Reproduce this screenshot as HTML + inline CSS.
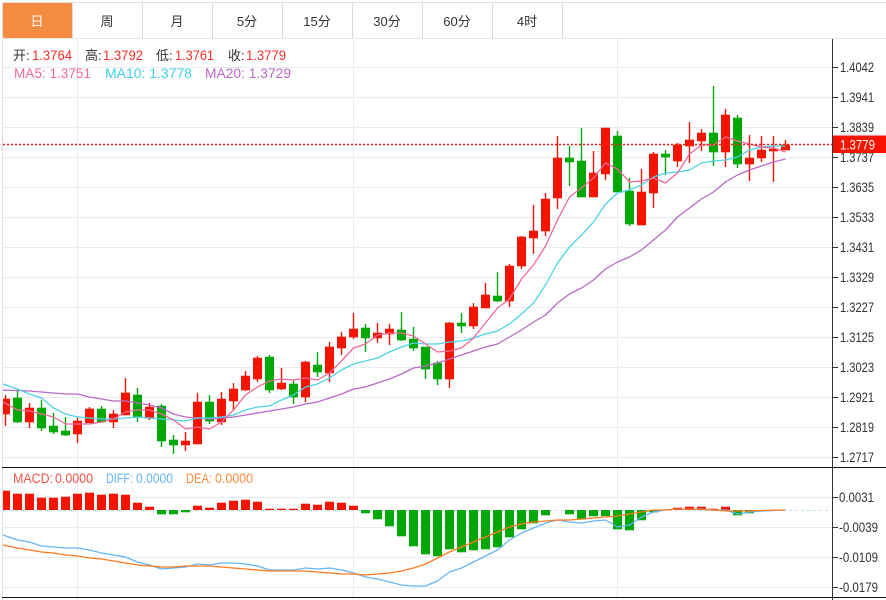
<!DOCTYPE html>
<html lang="zh"><head><meta charset="utf-8"><title>K线图</title>
<style>
html,body{margin:0;padding:0;background:#fff;width:886px;height:600px;overflow:hidden}
svg{display:block;font-family:"Liberation Sans","Noto Sans CJK SC",sans-serif}
</style></head><body>
<svg width="886" height="600" viewBox="0 0 886 600" xmlns="http://www.w3.org/2000/svg">
<rect width="886" height="600" fill="#fff"/>

<!-- grid -->
<path fill="none" stroke="#e6ecf1" stroke-width="1" d="M3 67.5H832M3 97.5H832M3 127.5H832M3 157.5H832M3 187.5H832M3 217.5H832M3 247.5H832M3 277.5H832M3 307.5H832M3 337.5H832M3 367.5H832M3 397.5H832M3 427.5H832M3 457.5H832M3 497.5H832M3 527.5H832M3 557.5H832M3 587.5H832M77.5 39V597M353.5 39V597M617.5 39V597"/>

<!-- candles -->
<g fill="none">
<path stroke="#f61300" stroke-width="1.4" d="M5.5 395V426M29.5 403V428M77.5 417V443M89.5 407V423M113.5 410V428M125.5 378V415M149.5 403V420M185.5 432V451M197.5 393V444M221.5 392V425M233.5 383V410M245.5 371V391M257.5 356V382M281.5 368V390M305.5 361V402M329.5 342V382M341.5 332V355M353.5 313V339M377.5 323V343M389.5 324V345M449.5 322V388M473.5 303V329M485.5 283V308M509.5 264V307M521.5 236V269M533.5 205V254M545.5 193V236M557.5 136V209M593.5 151V197M605.5 128V180M641.5 169V225M653.5 152V208M677.5 143V167M689.5 122V163M701.5 129V151M725.5 109V167M749.5 135V181M761.5 136V162M773.5 136V182M785.5 140V150"/>
<path stroke="#00a808" stroke-width="1.4" d="M17.5 389V423M41.5 400V431M53.5 413V434M65.5 417V436M101.5 406V423M137.5 388V422M161.5 404V447M173.5 435V454M209.5 395V424M269.5 355V393M293.5 380V404M317.5 352V377M365.5 324V352M401.5 312V341M413.5 327V351M425.5 347V379M437.5 361V385M461.5 313V333M497.5 272V302M569.5 146V186M581.5 128V197M617.5 131V192M629.5 178V226M665.5 150V175M713.5 86V166M737.5 115V168"/>
<g stroke-width="9">
<path id="rb" stroke="#f61300" d="M5.5 399V414M29.5 408V422M77.5 421V434M89.5 409V423M113.5 414V422M125.5 393V415M149.5 407V418M185.5 441V445M197.5 402V444M221.5 399V422M233.5 389V401M245.5 376V390M257.5 358V379M281.5 383V389M305.5 362V397M329.5 347V373M341.5 337V348M353.5 329V337M377.5 333V338M389.5 329V334M449.5 323V379M473.5 307V326M485.5 295V308M509.5 266V301M521.5 237V266M533.5 231V238M545.5 199V231M557.5 158V198M593.5 173V197M605.5 128V174M641.5 192V225M653.5 154V193M677.5 145V161M689.5 140V146M701.5 133V141M725.5 115V152M749.5 158V164M761.5 150V158M773.5 149V151M785.5 145V150"/>
<use href="#rb" y="-1" opacity=".3"/><use href="#rb" y="1" opacity=".3"/>
<path id="gb" stroke="#00a808" d="M17.5 398V422M41.5 408V428M53.5 426V432M65.5 431V435M101.5 409V422M137.5 395V417M161.5 406V441M173.5 440V445M209.5 402V421M269.5 357V390M293.5 384V397M317.5 365V372M365.5 328V338M401.5 330V340M413.5 339V348M425.5 347V369M437.5 363V379M461.5 323V326M497.5 296V301M569.5 158V162M581.5 161V197M617.5 136V192M629.5 191V224M665.5 154V157M713.5 133V152M737.5 118V164"/>
<use href="#gb" y="-1" opacity=".3"/><use href="#gb" y="1" opacity=".3"/>
</g>

<!-- MA lines -->
<g stroke-width="1.3" stroke-linejoin="round">
<path stroke="#ba68c8" d="M3 390L29.500 391L41.500 392L53.500 393L65.500 394L77.500 394L89.500 397L101.500 399L113.500 401L125.500 401L137.500 403L149.500 405L161.500 408L173.500 414L185.500 417L197.500 418L209.500 419L221.500 418L233.500 417L245.500 415L257.500 413L269.500 411L281.500 409L293.500 407L305.500 404L317.500 402L329.500 398L341.500 394L353.500 389L365.500 387L377.500 383L389.500 379L401.500 374L413.500 368L425.500 366L437.500 363L449.500 359L461.500 355L473.500 351L485.500 347L497.500 344L509.500 337L521.500 330L533.500 322L545.500 315L557.500 303L569.500 294L581.500 288L593.500 280L605.500 269L617.500 262L629.500 257L641.500 250L653.500 240L665.500 230L677.500 217L689.500 208L701.500 199L713.500 192L725.500 182L737.500 175L749.500 170L761.500 166L773.500 162L785.500 159"/>
<path stroke="#4dd3e8" d="M3 384L17.500 389L29.500 394L41.500 398L53.500 408L65.500 414L77.500 417L89.500 418L101.500 419L113.500 419L125.500 418L137.500 417L149.500 418L161.500 419L173.500 420L185.500 421L197.500 418L209.500 418L221.500 417L233.500 415L245.500 410L257.500 407L269.500 406L281.500 400L293.500 395L305.500 387L317.500 384L329.500 378L341.500 370L353.500 364L365.500 361L377.500 358L389.500 352L401.500 347L413.500 343L425.500 344L437.500 344L449.500 342L461.500 341L473.500 338L485.500 334L497.500 331L509.500 324L521.500 314L533.500 303L545.500 285L557.500 263L569.500 247L581.500 235L593.500 222L605.500 204L617.500 193L629.500 190L641.500 185L653.500 177L665.500 173L677.500 172L689.500 170L701.500 163L713.500 161L725.500 160L737.500 157L749.500 150L761.500 147L773.500 146L785.500 146"/>
<path stroke="#f2689a" d="M3 402L17.500 410L29.500 411L41.500 414L53.500 417L65.500 424L77.500 424L89.500 424L101.500 422L113.500 419L125.500 412L137.500 410L149.500 410L161.500 414L173.500 420L185.500 429L197.500 427L209.500 429L221.500 422L233.500 410L245.500 395L257.500 387L269.500 381L281.500 379L293.500 380L305.500 378L317.500 380L329.500 373L341.500 361L353.500 348L365.500 344L377.500 335L389.500 333L401.500 333L413.500 336L425.500 344L437.500 352L449.500 351L461.500 348L473.500 338L485.500 323L497.500 308L509.500 299L521.500 279L533.500 265L545.500 246L557.500 220L569.500 197L581.500 188L593.500 178L605.500 163L617.500 169L629.500 182L641.500 181L653.500 178L665.500 183L677.500 173L689.500 154L701.500 145L713.500 145L725.500 137L737.500 141L749.500 144L761.500 147L773.500 148L785.500 152"/>
</g>

<!-- MACD -->
<path stroke="#b8e2f2" stroke-dasharray="3 3" d="M3 510.500H830"/>
<g stroke-width="9">
<path id="rm" stroke="#f61300" d="M5.500 491V510M17.500 494V510M29.500 494V510M41.500 498V510M53.500 498V510M65.500 497V510M77.500 494V510M89.500 493V510M101.500 495V510M113.500 494V510M125.500 495V510M137.500 503V510M149.500 507V510M197.500 506V510M209.500 508V510M221.500 503V510M233.500 501V510M245.500 500V510M257.500 502V510M269.500 509V510M281.500 509V510M293.500 509V510M305.500 504V510M317.500 505V510M329.500 502V510M341.500 503V510M353.500 506V510M677.500 508V510M689.500 507V510M701.500 507V510M713.500 509V510M725.500 507V510"/>
<use href="#rm" y="-1" opacity=".3"/>
<path id="gm" stroke="#00a808" d="M161.500 510V514M173.500 510V514M185.500 510V512M365.500 510V513M377.500 510V519M389.500 510V526M401.500 510V536M413.500 510V546M425.500 510V554M437.500 510V556M449.500 510V549M461.500 510V552M473.500 510V550M485.500 510V549M497.500 510V547M509.500 510V537M521.500 510V529M533.500 510V523M545.500 510V515M569.500 510V514M581.500 510V519M593.500 510V516M605.500 510V516M617.500 510V529M629.500 510V530M641.500 510V520M653.500 510V512M737.500 510V515M749.500 510V513"/>
<use href="#gm" y="1" opacity=".3"/>
</g>
<g stroke-width="1.3" stroke-linejoin="round">
<path stroke="#64b5f6" d="M3 535L17.500 540L29.500 542L41.500 546L53.500 547L65.500 548L77.500 548L89.500 550L101.500 553L113.500 555L125.500 557L137.500 562L149.500 565L161.500 569L173.500 568L185.500 567L197.500 564L209.500 565L221.500 563L233.500 563L245.500 564L257.500 566L269.500 570L281.500 570L293.500 570L305.500 568L317.500 569L329.500 568L341.500 570L353.500 573L365.500 577L377.500 579L389.500 582L401.500 585L413.500 586L425.500 586L437.500 581L449.500 572L461.500 568L473.500 562L485.500 556L497.500 550L509.500 540L521.500 533L533.500 528L545.500 523L557.500 520L569.500 522L581.500 523L593.500 521L605.500 520L617.500 527L629.500 525L641.500 517L653.500 512L665.500 510L677.500 509L689.500 509L701.500 509L713.500 510L725.500 510L737.500 514L749.500 512L761.500 511L785.500 510"/>
<path stroke="#ff7a1f" d="M3 545L17.500 548L29.500 550L41.500 552L53.500 553L65.500 555L77.500 556L89.500 558L101.500 559L113.500 561L125.500 563L137.500 565L149.500 566L161.500 567L173.500 567L185.500 566L197.500 566L209.500 566L221.500 567L233.500 568L245.500 569L257.500 570L269.500 571L281.500 571L293.500 571L305.500 571L317.500 572L329.500 573L341.500 574L353.500 574L365.500 575L377.500 574L389.500 573L401.500 571L413.500 568L425.500 564L437.500 558L449.500 552L461.500 547L473.500 542L485.500 537L497.500 532L509.500 527L521.500 524L533.500 522L545.500 521L557.500 520L569.500 520L581.500 519L593.500 518L605.500 517L617.500 516L629.500 514L641.500 512L653.500 510L665.500 510L677.500 509L689.500 509L701.500 509.500L713.500 510L725.500 511L737.500 511L749.500 511L761.500 510.500L785.500 510"/>
</g>
</g>

<!-- last price dotted line -->
<path stroke="#ff1a0a" stroke-width="1.4" stroke-dasharray="2 2" d="M3 144.500H832"/>

<!-- frame -->
<rect x="0" y="0" width="2" height="600" fill="#fff"/>
<rect x="2" y="3" width="1" height="597" fill="#dfdfdf"/>
<rect x="2" y="2" width="884" height="1" fill="#dedede"/>
<rect x="2" y="38" width="884" height="1" fill="#e4e6e8"/>
<rect x="2" y="467" width="884" height="1" fill="#111"/>
<rect x="2" y="597" width="884" height="1" fill="#111"/>
<rect x="832" y="39" width="1" height="561" fill="#333"/>
<path stroke="#333" d="M833 67.500h5M833 97.500h5M833 127.500h5M833 157.500h5M833 187.500h5M833 217.500h5M833 247.500h5M833 277.500h5M833 307.500h5M833 337.500h5M833 367.500h5M833 397.500h5M833 427.500h5M833 457.500h5M833 497.500h5M833 527.500h5M833 557.500h5M833 587.500h5"/>

<!-- tabs -->
<rect x="3" y="3" width="69" height="35" rx="1" fill="#f58b40"/>
<path stroke="#d9d9d9" d="M72.500 3V38M142.500 3V38M212.500 3V38M282.500 3V38M352.500 3V38M422.500 3V38M492.500 3V38M562.500 3V38"/>
<g font-size="13" text-anchor="middle" fill="#333">
<text x="37" y="26" fill="#fff">日</text>
<text x="107" y="26">周</text>
<text x="177" y="26">月</text>
<text x="247" y="26">5分</text>
<text x="317" y="26">15分</text>
<text x="387" y="26">30分</text>
<text x="457" y="26">60分</text>
<text x="527" y="26">4时</text>
</g>

<!-- legends -->
<g font-size="14">
<g fill="#333" font-size="13">
<text x="13" y="60">开:</text><text x="85" y="60">高:</text><text x="156" y="60">低:</text><text x="228" y="60">收:</text>
</g>
<g fill="#f8302a">
<text x="32" y="60" textLength="40" lengthAdjust="spacingAndGlyphs">1.3764</text><text x="103" y="60" textLength="40" lengthAdjust="spacingAndGlyphs">1.3792</text><text x="175" y="60" textLength="39" lengthAdjust="spacingAndGlyphs">1.3761</text><text x="246" y="60" textLength="40" lengthAdjust="spacingAndGlyphs">1.3779</text>
</g>
<text x="14" y="78" fill="#f2689a" textLength="77" lengthAdjust="spacingAndGlyphs">MA5:  1.3751</text>
<text x="105" y="78" fill="#3fd0e6" textLength="87" lengthAdjust="spacingAndGlyphs">MA10:  1.3778</text>
<text x="205" y="78" fill="#ba68c8" textLength="86" lengthAdjust="spacingAndGlyphs">MA20:  1.3729</text>
<g font-size="13.5">
<text x="13" y="483" fill="#f0504a" textLength="40" lengthAdjust="spacingAndGlyphs">MACD:</text><text x="55" y="483" fill="#f0504a" textLength="38" lengthAdjust="spacingAndGlyphs">0.0000</text>
<text x="106" y="483" fill="#64b5f6" textLength="27" lengthAdjust="spacingAndGlyphs">DIFF:</text><text x="136" y="483" fill="#64b5f6" textLength="37" lengthAdjust="spacingAndGlyphs">0.0000</text>
<text x="186" y="483" fill="#ff8a3d" textLength="26" lengthAdjust="spacingAndGlyphs">DEA:</text><text x="215" y="483" fill="#ff8a3d" textLength="38" lengthAdjust="spacingAndGlyphs">0.0000</text>
</g>
</g>

<!-- axis labels -->
<g font-size="13.500" fill="#333">
<text x="840" y="72" textLength="34" lengthAdjust="spacingAndGlyphs">1.4042</text>
<text x="840" y="102" textLength="34" lengthAdjust="spacingAndGlyphs">1.3941</text>
<text x="840" y="132" textLength="34" lengthAdjust="spacingAndGlyphs">1.3839</text>
<text x="840" y="162" textLength="34" lengthAdjust="spacingAndGlyphs">1.3737</text>
<text x="840" y="192" textLength="34" lengthAdjust="spacingAndGlyphs">1.3635</text>
<text x="840" y="222" textLength="34" lengthAdjust="spacingAndGlyphs">1.3533</text>
<text x="840" y="252" textLength="34" lengthAdjust="spacingAndGlyphs">1.3431</text>
<text x="840" y="282" textLength="34" lengthAdjust="spacingAndGlyphs">1.3329</text>
<text x="840" y="312" textLength="34" lengthAdjust="spacingAndGlyphs">1.3227</text>
<text x="840" y="342" textLength="34" lengthAdjust="spacingAndGlyphs">1.3125</text>
<text x="840" y="372" textLength="34" lengthAdjust="spacingAndGlyphs">1.3023</text>
<text x="840" y="402" textLength="34" lengthAdjust="spacingAndGlyphs">1.2921</text>
<text x="840" y="432" textLength="34" lengthAdjust="spacingAndGlyphs">1.2819</text>
<text x="840" y="462" textLength="34" lengthAdjust="spacingAndGlyphs">1.2717</text>
<text x="839" y="502" textLength="35" lengthAdjust="spacingAndGlyphs">0.0031</text>
<text x="839" y="532" textLength="39" lengthAdjust="spacingAndGlyphs">-0.0039</text>
<text x="839" y="562" textLength="39" lengthAdjust="spacingAndGlyphs">-0.0109</text>
<text x="839" y="592" textLength="39" lengthAdjust="spacingAndGlyphs">-0.0179</text>
</g>

<!-- price tag -->
<rect x="833" y="135" width="53" height="1" fill="#f88"/>
<rect x="833" y="136" width="53" height="17" fill="#f61300"/>
<text x="840" y="149.500" font-size="13.500" fill="#fff" textLength="35" lengthAdjust="spacingAndGlyphs">1.3779</text>
</svg>
</body></html>
